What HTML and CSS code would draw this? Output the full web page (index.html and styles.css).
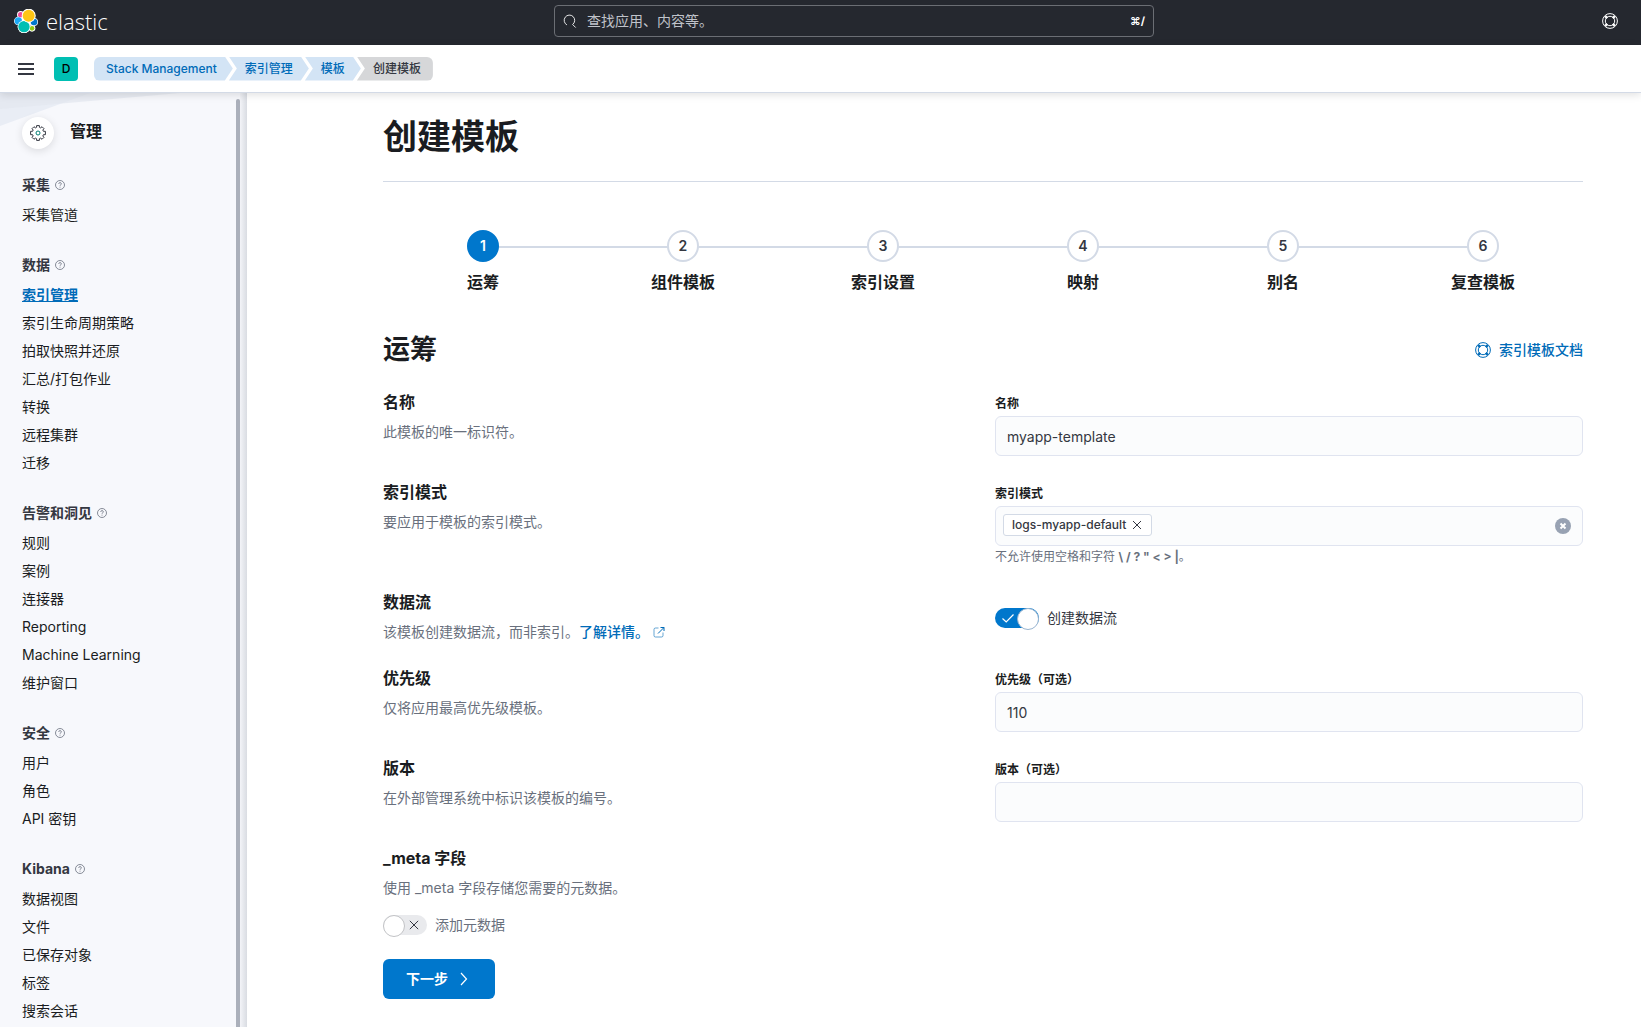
FILE: index.html
```html
<!DOCTYPE html>
<html lang="zh-CN">
<head>
<meta charset="utf-8">
<meta name="viewport" content="width=device-width, initial-scale=1">
<title>创建模板 - Elastic</title>
<link rel="stylesheet" href="styles.css">
</head>
<body>
<svg class="sprite" aria-hidden="true">
  <symbol id="icon-help" viewBox="0 0 16 16">
    <g fill="none" stroke="currentColor">
      <circle cx="8" cy="8" r="7.400"/>
      <circle cx="8" cy="8" r="4.700"/>
      <path stroke-width="2.400" d="M3.200 3.200l2 2M12.800 3.200l-2 2M3.200 12.800l2-2M12.800 12.800l-2-2"/>
    </g>
  </symbol>
  <symbol id="icon-question" viewBox="0 0 12 12">
    <g fill="none" stroke="currentColor" stroke-width=".8">
      <circle cx="6" cy="6" r="4.500"/>
      <path d="M4.700 4.900c0-.8.5-1.300 1.300-1.300s1.400.5 1.400 1.200c0 1-1.400 1-1.400 2M6 7.700v.9"/>
    </g>
  </symbol>
</svg>

<header class="topbar">
  <a class="brand" href="#" aria-label="Elastic">
    <svg class="brand-mark" viewBox="0 0 72 72" aria-hidden="true">
      <g fill="#fff">
        <circle cx="44" cy="20" r="20"/><circle cx="20" cy="17" r="11"/><circle cx="13" cy="36" r="13"/>
        <circle cx="30" cy="53" r="19"/><circle cx="60" cy="39" r="12"/><circle cx="54" cy="58" r="10"/><circle cx="37" cy="36" r="18"/>
      </g>
      <circle cx="20" cy="17" r="8" fill="#f04e98"/>
      <circle cx="13" cy="36" r="11" fill="#1ba9f5"/>
      <circle cx="60" cy="39" r="10" fill="#07c"/>
      <circle cx="54" cy="58" r="7" fill="#93c90e"/>
      <circle cx="30" cy="53" r="19" fill="#fff"/>
      <circle cx="30" cy="53" r="17" fill="#00bfb3"/>
      <circle cx="44" cy="20" r="21" fill="#fff"/>
      <circle cx="44" cy="20" r="18" fill="#fec514"/>
    </svg>
    <span class="brand-name">elastic</span>
  </a>
  <label class="search">
    <svg class="search-icon" viewBox="0 0 16 16" aria-hidden="true"><path fill="none" stroke="currentColor" d="M4.500 12.500a6 6 0 1 1 6.500-.5l3.500 3.500"/></svg>
    <input class="search-input" type="search" placeholder="查找应用、内容等。" aria-label="查找应用、内容等。">
    <kbd class="search-key">⌘/</kbd>
  </label>
  <button class="topbar-button" type="button" aria-label="帮助"><svg class="icon" aria-hidden="true"><use href="#icon-help"/></svg></button>
</header>

<div class="subbar">
  <button class="menu-button" type="button" aria-label="切换主导航"><svg class="icon" viewBox="0 0 16 16" aria-hidden="true"><path fill="currentColor" d="M0 2h16v2H0zM0 7h16v2H0zM0 12h16v2H0z"/></svg></button>
  <button class="space-avatar" type="button" aria-label="默认空间">D</button>
  <nav class="breadcrumbs" aria-label="导航路径">
    <a class="crumb crumb-first" href="#">Stack Management</a>
    <a class="crumb" href="#">索引管理</a>
    <a class="crumb" href="#">模板</a>
    <span class="crumb crumb-last" aria-current="page">创建模板</span>
  </nav>
</div>

<div class="layout">
  <aside class="sidebar">
    <svg class="sidebar-art" viewBox="0 0 180 34" aria-hidden="true"><path fill="#e9edf5" d="M0 0h90L0 33z"/><path fill="#e3e7ef" fill-opacity=".7" d="M0 0h180L0 16z"/></svg>
    <nav class="sidebar-nav" aria-label="管理">
      <div class="sidebar-title">
        <span class="sidebar-badge">
          <svg class="icon" viewBox="0 0 16 16" aria-hidden="true"><path fill="none" stroke="#343741" d="M6.600.6h2.800v1.700l1.300.6 1.300-1.200 2 2-1.200 1.300.6 1.300h2v3.400h-2l-.6 1.300L14 12.300l-2 2-1.300-1.200-1.300.6v1.700H6.600v-1.700l-1.300-.6L4 14.300l-2-2L3.200 11l-.6-1.300h-2V6.300h2L3.200 5 2 3.700l2-2 1.300 1.200 1.300-.6z"/><circle cx="8" cy="8" r="2" fill="none" stroke="#017d73"/></svg>
        </span>
        <h2 class="sidebar-heading">管理</h2>
      </div>

      <section class="nav-group">
        <h3 class="nav-heading">采集<svg class="icon-small" aria-hidden="true"><use href="#icon-question"/></svg></h3>
        <a class="nav-link" href="#">采集管道</a>
      </section>
      <section class="nav-group">
        <h3 class="nav-heading">数据<svg class="icon-small" aria-hidden="true"><use href="#icon-question"/></svg></h3>
        <a class="nav-link nav-link-active" href="#">索引管理</a>
        <a class="nav-link" href="#">索引生命周期策略</a>
        <a class="nav-link" href="#">拍取快照并还原</a>
        <a class="nav-link" href="#">汇总/打包作业</a>
        <a class="nav-link" href="#">转换</a>
        <a class="nav-link" href="#">远程集群</a>
        <a class="nav-link" href="#">迁移</a>
      </section>
      <section class="nav-group">
        <h3 class="nav-heading">告警和洞见<svg class="icon-small" aria-hidden="true"><use href="#icon-question"/></svg></h3>
        <a class="nav-link" href="#">规则</a>
        <a class="nav-link" href="#">案例</a>
        <a class="nav-link" href="#">连接器</a>
        <a class="nav-link" href="#">Reporting</a>
        <a class="nav-link" href="#">Machine Learning</a>
        <a class="nav-link" href="#">维护窗口</a>
      </section>
      <section class="nav-group">
        <h3 class="nav-heading">安全<svg class="icon-small" aria-hidden="true"><use href="#icon-question"/></svg></h3>
        <a class="nav-link" href="#">用户</a>
        <a class="nav-link" href="#">角色</a>
        <a class="nav-link" href="#">API 密钥</a>
      </section>
      <section class="nav-group">
        <h3 class="nav-heading">Kibana<svg class="icon-small" aria-hidden="true"><use href="#icon-question"/></svg></h3>
        <a class="nav-link" href="#">数据视图</a>
        <a class="nav-link" href="#">文件</a>
        <a class="nav-link" href="#">已保存对象</a>
        <a class="nav-link" href="#">标签</a>
        <a class="nav-link" href="#">搜索会话</a>
      </section>
    </nav>
    <div class="sidebar-thumb"></div>
    <div class="sidebar-edge"></div>
  </aside>

  <main class="content">
    <h1 class="page-title">创建模板</h1>

    <ol class="steps">
      <li class="step"><button class="step-button step-current" type="button" aria-current="step"><span class="step-number">1</span><span class="step-name">运筹</span></button></li>
      <li class="step"><button class="step-button" type="button"><span class="step-number">2</span><span class="step-name">组件模板</span></button></li>
      <li class="step"><button class="step-button" type="button"><span class="step-number">3</span><span class="step-name">索引设置</span></button></li>
      <li class="step"><button class="step-button" type="button"><span class="step-number">4</span><span class="step-name">映射</span></button></li>
      <li class="step"><button class="step-button" type="button"><span class="step-number">5</span><span class="step-name">别名</span></button></li>
      <li class="step"><button class="step-button" type="button"><span class="step-number">6</span><span class="step-name">复查模板</span></button></li>
    </ol>

    <div class="section-head">
      <h2 class="section-title">运筹</h2>
      <a class="docs-link" href="#"><svg class="icon" aria-hidden="true"><use href="#icon-help"/></svg>索引模板文档</a>
    </div>

    <form class="form">
      <div class="form-row">
        <div class="describe">
          <h3 class="describe-title">名称</h3>
          <p class="describe-text">此模板的唯一标识符。</p>
        </div>
        <div class="field">
          <label class="field-label" for="name">名称</label>
          <input class="field-input" id="name" type="text" value="myapp-template">
        </div>
      </div>

      <div class="form-row">
        <div class="describe">
          <h3 class="describe-title">索引模式</h3>
          <p class="describe-text">要应用于模板的索引模式。</p>
        </div>
        <div class="field">
          <label class="field-label" for="patterns">索引模式</label>
          <div class="combo">
            <span class="pill">logs-myapp-default<button class="pill-remove" type="button" aria-label="移除 logs-myapp-default"><svg class="icon-cross" viewBox="0 0 10 10" aria-hidden="true"><path fill="none" stroke="currentColor" d="M1 1l8 8M9 1L1 9"/></svg></button></span>
            <input class="combo-input" id="patterns" type="text">
            <button class="combo-clear" type="button" aria-label="清除输入"><svg class="icon" viewBox="0 0 16 16" aria-hidden="true"><circle cx="8" cy="8" r="8" fill="#98a2b3"/><path fill="none" stroke="#fff" stroke-width="2" d="M5.500 5.500l5 5M10.500 5.500l-5 5"/></svg></button>
          </div>
          <p class="field-help">不允许使用空格和字符 <strong>\ / ? " &lt; &gt; |</strong>。</p>
        </div>
      </div>

      <div class="form-row">
        <div class="describe">
          <h3 class="describe-title">数据流</h3>
          <p class="describe-text">该模板创建数据流，而非索引。<a class="text-link" href="#">了解详情。<svg class="icon-small" viewBox="0 0 12 12" aria-hidden="true"><path fill="none" stroke="currentColor" d="M5.500 2H2.500A1.500 1.500 0 0 0 1 3.500v6A1.500 1.500 0 0 0 2.500 11h6A1.500 1.500 0 0 0 10 9.500V6.500" opacity=".6"/><path fill="none" stroke="currentColor" d="M7.500 1.500h3.500V5M11 1.500L5 7.500"/></svg></a></p>
        </div>
        <div class="field field-switch">
          <label class="switch" for="stream">
            <span class="switch-box">
              <input class="switch-input" id="stream" type="checkbox" role="switch" checked>
              <svg class="switch-mark switch-mark-on" viewBox="0 0 12 12" aria-hidden="true"><path fill="none" stroke="#fff" stroke-width="1.200" d="M.5 6.500l3.700 3.500L11.500 2.500"/></svg>
            </span>
            创建数据流
          </label>
        </div>
      </div>

      <div class="form-row">
        <div class="describe">
          <h3 class="describe-title">优先级</h3>
          <p class="describe-text">仅将应用最高优先级模板。</p>
        </div>
        <div class="field">
          <label class="field-label" for="priority">优先级（可选）</label>
          <input class="field-input" id="priority" type="text" inputmode="numeric" value="110">
        </div>
      </div>

      <div class="form-row">
        <div class="describe">
          <h3 class="describe-title">版本</h3>
          <p class="describe-text">在外部管理系统中标识该模板的编号。</p>
        </div>
        <div class="field">
          <label class="field-label" for="version">版本（可选）</label>
          <input class="field-input" id="version" type="text" inputmode="numeric">
        </div>
      </div>

      <div class="form-row">
        <div class="describe">
          <h3 class="describe-title">_meta 字段</h3>
          <p class="describe-text">使用 _meta 字段存储您需要的元数据。</p>
          <label class="switch switch-muted" for="meta">
            <span class="switch-box">
              <input class="switch-input" id="meta" type="checkbox" role="switch">
              <svg class="switch-mark switch-mark-off" viewBox="0 0 12 12" aria-hidden="true"><path fill="none" stroke="#343741" stroke-width="1.200" d="M1 1l10 10M11 1L1 11"/></svg>
            </span>
            添加元数据
          </label>
        </div>
      </div>

      <button class="next-button" type="button">下一步<svg class="icon" viewBox="0 0 16 16" aria-hidden="true"><path fill="none" stroke="currentColor" stroke-width="1.200" d="M5 2l5.500 6L5 14"/></svg></button>
    </form>
  </main>
</div>
</body>
</html>
```

FILE: styles.css
```css
* {
  box-sizing: border-box;
}

body {
  display: flex;
  flex-direction: column;
  min-height: 100vh;
  margin: 0;
  background: #fff;
  color: #343741;
  font-family: Inter, "Noto Sans CJK SC", sans-serif;
  font-size: 14px;
  line-height: 20px;
}

h1, h2, h3, p, ol {
  margin: 0;
  padding: 0;
}

button, input {
  margin: 0;
  padding: 0;
  border: 0;
  background: none;
  color: inherit;
  font: inherit;
}

button {
  cursor: pointer;
}

a {
  color: inherit;
  text-decoration: none;
}

.sprite {
  position: absolute;
  width: 0;
  height: 0;
}

.icon {
  display: block;
  width: 16px;
  height: 16px;
}

.icon-small {
  width: 12px;
  height: 12px;
}

.icon-cross {
  display: block;
  width: 10px;
  height: 10px;
}

/* Top bar */
.topbar {
  display: flex;
  justify-content: space-between;
  height: 45px;
  padding: 5px 11px 8px 14px;
  background: #25282f;
  color: #fff;
}

.brand {
  display: flex;
  align-items: center;
  gap: 8px;
  width: 104px;
}

.brand-mark {
  width: 24px;
  height: 24px;
}

.brand-name {
  font-family: "Open Sans", sans-serif;
  font-size: 22px;
  font-weight: 300;
  line-height: 24px;
}

.search {
  display: flex;
  align-items: center;
  gap: 10px;
  width: 600px;
  padding: 0 8px;
  border: 1px solid #6b6e74;
  border-radius: 4px;
}

.search-icon {
  width: 14px;
  height: 14px;
}

.search-input {
  flex: 1;
  outline: 0;
  appearance: none;
}

.search-input::placeholder {
  color: #c0c3ca;
  opacity: 1;
}

.search-key {
  font-family: Inter, "DejaVu Sans", sans-serif;
  font-size: 11px;
  font-weight: 700;
}

.topbar-button {
  display: grid;
  place-items: center;
  width: 40px;
}

/* Breadcrumb bar */
.subbar {
  position: relative;
  display: flex;
  align-items: center;
  height: 48px;
  padding: 0 18px;
  border-bottom: 1px solid #d3dae6;
  background: #fff;
  box-shadow: 0 2px 8px rgba(0, 0, 0, .12);
  z-index: 1;
}

.space-avatar {
  width: 24px;
  height: 24px;
  margin: 0 16px 0 20px;
  border-radius: 4px;
  background: #00bfb3;
  color: #000;
  font-size: 12px;
  font-weight: 500;
}

.breadcrumbs {
  display: flex;
}

.crumb {
  height: 24px;
  margin-right: -4px;
  padding: 0 16px;
  background: #d3e4f5;
  color: #006bb8;
  font-size: 12px;
  font-weight: 500;
  line-height: 24px;
  clip-path: polygon(0 0, calc(100% - 8px) 0, 100% 50%, calc(100% - 8px) 100%, 0 100%, 8px 50%);
}

.crumb-first {
  padding-left: 12px;
  border-radius: 6px 0 0 6px;
  clip-path: polygon(0 0, calc(100% - 8px) 0, 100% 50%, calc(100% - 8px) 100%, 0 100%);
}

.crumb-last {
  margin-right: 0;
  padding-right: 12px;
  border-radius: 0 6px 6px 0;
  background: #d6d7d9;
  color: #343741;
  clip-path: polygon(0 0, 100% 0, 100% 100%, 0 100%, 8px 50%);
}

/* Sidebar */
.layout {
  display: flex;
  flex: 1;
}

.sidebar {
  position: relative;
  display: flex;
  flex: none;
  width: 247px;
  background: #f7f8fc;
}

.sidebar-art {
  position: absolute;
  top: 0;
  left: 0;
  width: 180px;
  height: 34px;
}

.sidebar-nav {
  position: relative;
  display: flex;
  flex: 1;
  flex-direction: column;
  gap: 24px;
  padding: 24px 0 0 22px;
}

.sidebar-title {
  display: flex;
  gap: 16px;
  height: 32px;
}

.sidebar-badge {
  display: grid;
  place-items: center;
  width: 32px;
  height: 32px;
  border-radius: 50%;
  background: #fff;
  box-shadow: 0 2px 8px rgba(0, 0, 0, .12);
}

.sidebar-heading {
  color: #1a1c21;
  font-size: 16px;
  line-height: 28px;
}

.nav-group {
  display: flex;
  flex-direction: column;
}

.nav-heading {
  display: flex;
  align-items: center;
  gap: 4px;
  margin-bottom: 4px;
  font-size: 14px;
  line-height: 24px;
}

.nav-heading .icon-small {
  color: #69707d;
}

.nav-link {
  color: #1a1c21;
  line-height: 28px;
}

.nav-link-active {
  color: #006bb8;
  font-weight: 700;
  text-decoration: underline;
}

.sidebar-thumb {
  width: 4px;
  margin-top: 6px;
  border-radius: 2px 2px 0 0;
  background: #abb0bb;
}

.sidebar-edge {
  width: 7px;
  background: linear-gradient(to right, #f3f4f8, #d9dce2);
}

/* Page content */
.content {
  flex: 1;
  min-width: 0;
  padding: 24px 58px 28px 136px;
}

.page-title {
  padding-bottom: 24px;
  border-bottom: 1px solid #d3dae6;
  color: #1a1c21;
  font-size: 34px;
  line-height: 40px;
}

.steps {
  display: flex;
  margin-top: 48px;
  list-style: none;
}

.step {
  display: flex;
  flex: 1;
  justify-content: center;
  background: linear-gradient(#d3dae6, #d3dae6) 0 16px / 100% 2px no-repeat;
}

.step:first-child {
  background-position: 100% 16px;
  background-size: 50% 2px;
}

.step:last-child {
  background-size: 50% 2px;
}

.step-button {
  display: flex;
  flex-direction: column;
  align-items: center;
  gap: 8px;
}

.step-number {
  width: 32px;
  height: 32px;
  border: 2px solid #d3dae6;
  border-radius: 50%;
  background: #fff;
  font-weight: 600;
  line-height: 28px;
}

.step-current .step-number {
  border-color: #07c;
  background: #07c;
  color: #fff;
}

.step-name {
  color: #1a1c21;
  font-size: 16px;
  font-weight: 700;
  line-height: 24px;
}

.section-head {
  display: flex;
  align-items: center;
  justify-content: space-between;
  margin: 40px 0 24px;
}

.section-title {
  color: #1a1c21;
  font-size: 27px;
  line-height: 32px;
}

.docs-link {
  display: flex;
  align-items: center;
  gap: 8px;
  color: #006bb8;
  font-weight: 500;
}

.form {
  display: flex;
  flex-direction: column;
  gap: 24px;
}

.form-row {
  display: grid;
  grid-template-columns: 1fr 1fr;
  gap: 24px;
}

.describe-title {
  margin-bottom: 8px;
  color: #1a1c21;
  font-size: 16px;
  line-height: 24px;
}

.describe-text {
  color: #69707d;
}

.text-link {
  color: #006bb8;
  font-weight: 500;
}

.text-link .icon-small {
  margin-left: 4px;
  vertical-align: -1px;
}

.field {
  display: flex;
  flex-direction: column;
  gap: 2px;
  padding-top: 4px;
}

.field-label {
  color: #1a1c21;
  font-size: 12px;
  font-weight: 700;
  line-height: 20px;
}

.field-input,
.combo {
  width: 100%;
  height: 40px;
  border: 1px solid #e0e4f0;
  border-radius: 6px;
  background: #fbfcfd;
}

.field-input {
  padding: 0 11px;
}

.combo {
  display: flex;
  align-items: center;
  padding: 0 11px 0 7px;
}

.combo-input {
  flex: 1;
  min-width: 0;
  outline: 0;
}

.pill {
  display: flex;
  align-items: center;
  gap: 6px;
  height: 22px;
  margin-bottom: 2px;
  padding: 0 9px 0 8px;
  border: 1px solid #d3dae6;
  border-radius: 3px;
  background: #fff;
  font-size: 12px;
  font-weight: 500;
}

.field-help {
  color: #69707d;
  font-size: 12px;
  line-height: 18px;
}

.field-switch {
  padding-top: 18px;
}

/* Switches */
.switch {
  display: flex;
  align-items: center;
  gap: 8px;
  height: 20px;
}

.switch-muted {
  margin-top: 17px;
  color: #69707d;
}

.switch-box {
  display: grid;
  align-items: center;
}

.switch-input,
.switch-mark {
  grid-area: 1 / 1;
}

.switch-input {
  display: flex;
  width: 44px;
  height: 20px;
  border-radius: 10px;
  background: #e9eaed;
  appearance: none;
}

.switch-input:checked {
  justify-content: flex-end;
  background: #07c;
}

.switch-input::before {
  width: 20px;
  height: 20px;
  border: 1px solid #c2c3c6;
  border-radius: 50%;
  background: #fff;
  content: "";
}

.switch-input:checked::before {
  border-color: #98b4d0;
}

.switch-mark {
  pointer-events: none;
}

.switch-mark-on {
  width: 12px;
  height: 12px;
  margin-left: 7px;
}

.switch-mark-off {
  justify-self: end;
  width: 10px;
  height: 10px;
  margin-right: 8px;
}

.next-button {
  display: flex;
  align-items: center;
  align-self: flex-start;
  justify-content: center;
  gap: 8px;
  min-width: 112px;
  height: 40px;
  border-radius: 6px;
  background: #07c;
  color: #fff;
  font-weight: 700;
}
```
